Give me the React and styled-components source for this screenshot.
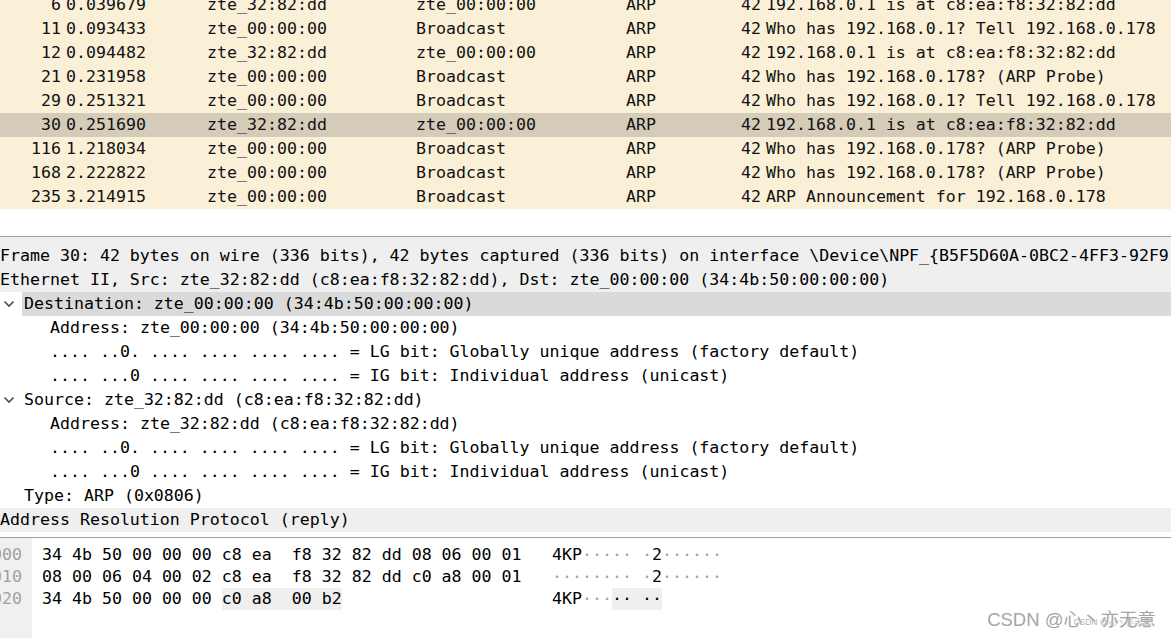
import styled, { createGlobalStyle } from "styled-components";

const GlobalStyle = createGlobalStyle`
  html, body {
    margin: 0;
    padding: 0;
    background: #ffffff;
    overflow: hidden;
  }
  * {
    box-sizing: border-box;
  }
`;

const MONO = `"DejaVu Sans Mono", "Liberation Mono", monospace`;

let Window = styled.div`
  position: relative;
  width: 1171px;
  height: 638px;
  display: flex;
  flex-direction: column;
  overflow: hidden;
  font-family: ${MONO};
  font-size: 16.6px;
  color: #121212;
  background: #ffffff;
`;

/* ---------- packet list ---------- */

let PacketPane = styled.div`
  height: 236px;
  flex: none;
  overflow: hidden;
`;

let PacketList = styled.div`
  margin-top: -7px;
`;

let PacketRow = styled.div`
  display: grid;
  grid-template-columns: 61px 146px 209px 210px 74px 61px 1fr;
  height: 24px;
  line-height: 24px;
  white-space: pre;
  background: ${(p) => (p.$selected ? "#d4ccb9" : "#faf0d7")};
`;

let Cell = styled.div`
  overflow: hidden;
  text-align: ${(p) => p.$align || "left"};
  padding-left: ${(p) => p.$pad || 0}px;
`;

/* ---------- splitters ---------- */

let Splitter = styled.div`
  flex: none;
  height: 8px;
  border-top: 1px solid #a0a0a0;
  background: #efefef;
`;

/* ---------- details tree ---------- */

let DetailPane = styled.div`
  flex: none;
  height: 293px;
  overflow: hidden;
  color: #000;
`;

let TreeRow = styled.div`
  display: flex;
  height: 24px;
  line-height: 24px;
  white-space: pre;
  background: ${(p) => (p.$shaded ? "#efefef" : "transparent")};
`;

let Indent = styled.div`
  flex: none;
  width: ${(p) => p.$w}px;
  display: flex;
  align-items: center;
  padding-left: 3px;
`;

let Label = styled.div`
  flex: 1;
  overflow: hidden;
  padding-left: ${(p) => (p.$level ? 2 : 0)}px;
  background: ${(p) => (p.$selected ? "#dadada" : "transparent")};
`;

/* ---------- bytes pane ---------- */

let HexPane = styled.div`
  flex: 1;
  display: flex;
  border-top: 1px solid #a0a0a0;
  color: #000;
`;

let OffsetCol = styled.div`
  flex: none;
  width: 32px;
  background: #f0f0f0;
  padding-top: 6px;
  overflow: hidden;
  color: #a0a0a0;
`;

let OffsetLine = styled.div`
  display: flex;
  justify-content: flex-end;
  height: 22px;
  line-height: 22px;
  padding-right: 10px;
`;

let HexData = styled.div`
  flex: 1;
  padding-top: 6px;
  padding-left: 10px;
`;

let HexLine = styled.div`
  display: flex;
  height: 22px;
  line-height: 22px;
  white-space: pre;
`;

let HexBytes = styled.div`
  flex: none;
  width: 510px;
`;

let Mark = styled.span`
  display: inline-block;
  height: 22px;
  background: ${(p) => (p.$hl ? "#efefef" : "transparent")};
`;

let Ch = styled.span`
  color: ${(p) => (p.$dim ? "#a4a4a4" : "#000")};
`;

/* ---------- watermark ---------- */

let Watermark = styled.div`
  position: absolute;
  right: 15px;
  bottom: 7px;
  font-family: "Liberation Sans", "Noto Sans CJK SC", sans-serif;
  font-size: 18.5px;
  color: #a6a6a6;
  text-shadow: 0 0 1px #ffffff;
  white-space: nowrap;
`;

let WatermarkSmall = styled.div`
  position: absolute;
  right: 20px;
  bottom: 11px;
  font-family: "Liberation Sans", "Noto Sans CJK SC", sans-serif;
  font-size: 8.5px;
  color: #b4b4b4;
  white-space: nowrap;
`;

function Chevron() {
  return (
    <svg width="12" height="8" viewBox="0 0 12 8">
      <path d="M1.5 1.5 L6 6 L10.5 1.5" fill="none" stroke="#4a4a4a" strokeWidth="1.6" />
    </svg>
  );
}

const packets = [
  ["6", "0.039679", "zte_32:82:dd", "zte_00:00:00", "192.168.0.1 is at c8:ea:f8:32:82:dd"],
  ["11", "0.093433", "zte_00:00:00", "Broadcast", "Who has 192.168.0.1? Tell 192.168.0.178"],
  ["12", "0.094482", "zte_32:82:dd", "zte_00:00:00", "192.168.0.1 is at c8:ea:f8:32:82:dd"],
  ["21", "0.231958", "zte_00:00:00", "Broadcast", "Who has 192.168.0.178? (ARP Probe)"],
  ["29", "0.251321", "zte_00:00:00", "Broadcast", "Who has 192.168.0.1? Tell 192.168.0.178"],
  ["30", "0.251690", "zte_32:82:dd", "zte_00:00:00", "192.168.0.1 is at c8:ea:f8:32:82:dd"],
  ["116", "1.218034", "zte_00:00:00", "Broadcast", "Who has 192.168.0.178? (ARP Probe)"],
  ["168", "2.222822", "zte_00:00:00", "Broadcast", "Who has 192.168.0.178? (ARP Probe)"],
  ["235", "3.214915", "zte_00:00:00", "Broadcast", "ARP Announcement for 192.168.0.178"],
];

const LG = ".... ..0. .... .... .... .... = LG bit: Globally unique address (factory default)";
const IG = ".... ...0 .... .... .... .... = IG bit: Individual address (unicast)";

const tree = [
  {
    level: 0,
    shaded: true,
    text: "Frame 30: 42 bytes on wire (336 bits), 42 bytes captured (336 bits) on interface \\Device\\NPF_{B5F5D60A-0BC2-4FF3-92F9-7A1C0E3D4B52}, id 0",
  },
  {
    level: 0,
    shaded: true,
    text: "Ethernet II, Src: zte_32:82:dd (c8:ea:f8:32:82:dd), Dst: zte_00:00:00 (34:4b:50:00:00:00)",
  },
  { level: 1, open: true, selected: true, text: "Destination: zte_00:00:00 (34:4b:50:00:00:00)" },
  { level: 2, text: "Address: zte_00:00:00 (34:4b:50:00:00:00)" },
  { level: 2, text: LG },
  { level: 2, text: IG },
  { level: 1, open: true, text: "Source: zte_32:82:dd (c8:ea:f8:32:82:dd)" },
  { level: 2, text: "Address: zte_32:82:dd (c8:ea:f8:32:82:dd)" },
  { level: 2, text: LG },
  { level: 2, text: IG },
  { level: 1, text: "Type: ARP (0x0806)" },
  { level: 0, shaded: true, text: "Address Resolution Protocol (reply)" },
];

const indentWidth = { 0: 0, 1: 22, 2: 48 };

// each line: offset, hex segments, ascii segments
const hexLines = [
  {
    offset: "0000",
    hex: [{ t: "34 4b 50 00 00 00 c8 ea  f8 32 82 dd 08 06 00 01" }],
    ascii: [{ t: "4KP····· ·2······" }],
  },
  {
    offset: "0010",
    hex: [{ t: "08 00 06 04 00 02 c8 ea  f8 32 82 dd c0 a8 00 01" }],
    ascii: [{ t: "········ ·2······" }],
  },
  {
    offset: "0020",
    hex: [{ t: "34 4b 50 00 00 00 " }, { t: "c0 a8  00 b2", hl: true }],
    ascii: [{ t: "4KP···" }, { t: "·· ··", hl: true }],
  },
];

function AsciiText({ text, hl }) {
  return text.split("").map((c, i) => (
    <Ch key={i} $dim={c === "·" && !hl}>
      {c}
    </Ch>
  ));
}

export default function App() {
  return (
    <>
      <GlobalStyle />
      <Window>
        <PacketPane>
          <PacketList>
            {packets.map((p) => (
              <PacketRow key={p[0]} $selected={p[0] === "30"}>
                <Cell $align="right">{p[0]}</Cell>
                <Cell $pad={5}>{p[1]}</Cell>
                <Cell>{p[2]}</Cell>
                <Cell>{p[3]}</Cell>
                <Cell>ARP</Cell>
                <Cell $align="right">42</Cell>
                <Cell $pad={5}>{p[4]}</Cell>
              </PacketRow>
            ))}
          </PacketList>
        </PacketPane>

        <Splitter />

        <DetailPane>
          {tree.map((n, i) => (
            <TreeRow key={i} $shaded={n.shaded}>
              {n.level > 0 && (
                <Indent $w={indentWidth[n.level]}>{n.open && <Chevron />}</Indent>
              )}
              <Label $level={n.level} $selected={n.selected}>
                {n.text}
              </Label>
            </TreeRow>
          ))}
        </DetailPane>

        <HexPane>
          <OffsetCol>
            {hexLines.map((l) => (
              <OffsetLine key={l.offset}>
                <span>{l.offset}</span>
              </OffsetLine>
            ))}
          </OffsetCol>
          <HexData>
            {hexLines.map((l) => (
              <HexLine key={l.offset}>
                <HexBytes>
                  {l.hex.map((s, i) => (
                    <Mark key={i} $hl={s.hl}>
                      {s.t}
                    </Mark>
                  ))}
                </HexBytes>
                <div>
                  {l.ascii.map((s, i) => (
                    <Mark key={i} $hl={s.hl}>
                      <AsciiText text={s.t} hl={s.hl} />
                    </Mark>
                  ))}
                </div>
              </HexLine>
            ))}
          </HexData>
        </HexPane>

        <Watermark>CSDN @心丶亦无意</Watermark>
        <WatermarkSmall>CSDN @心丶亦无意</WatermarkSmall>
      </Window>
    </>
  );
}
